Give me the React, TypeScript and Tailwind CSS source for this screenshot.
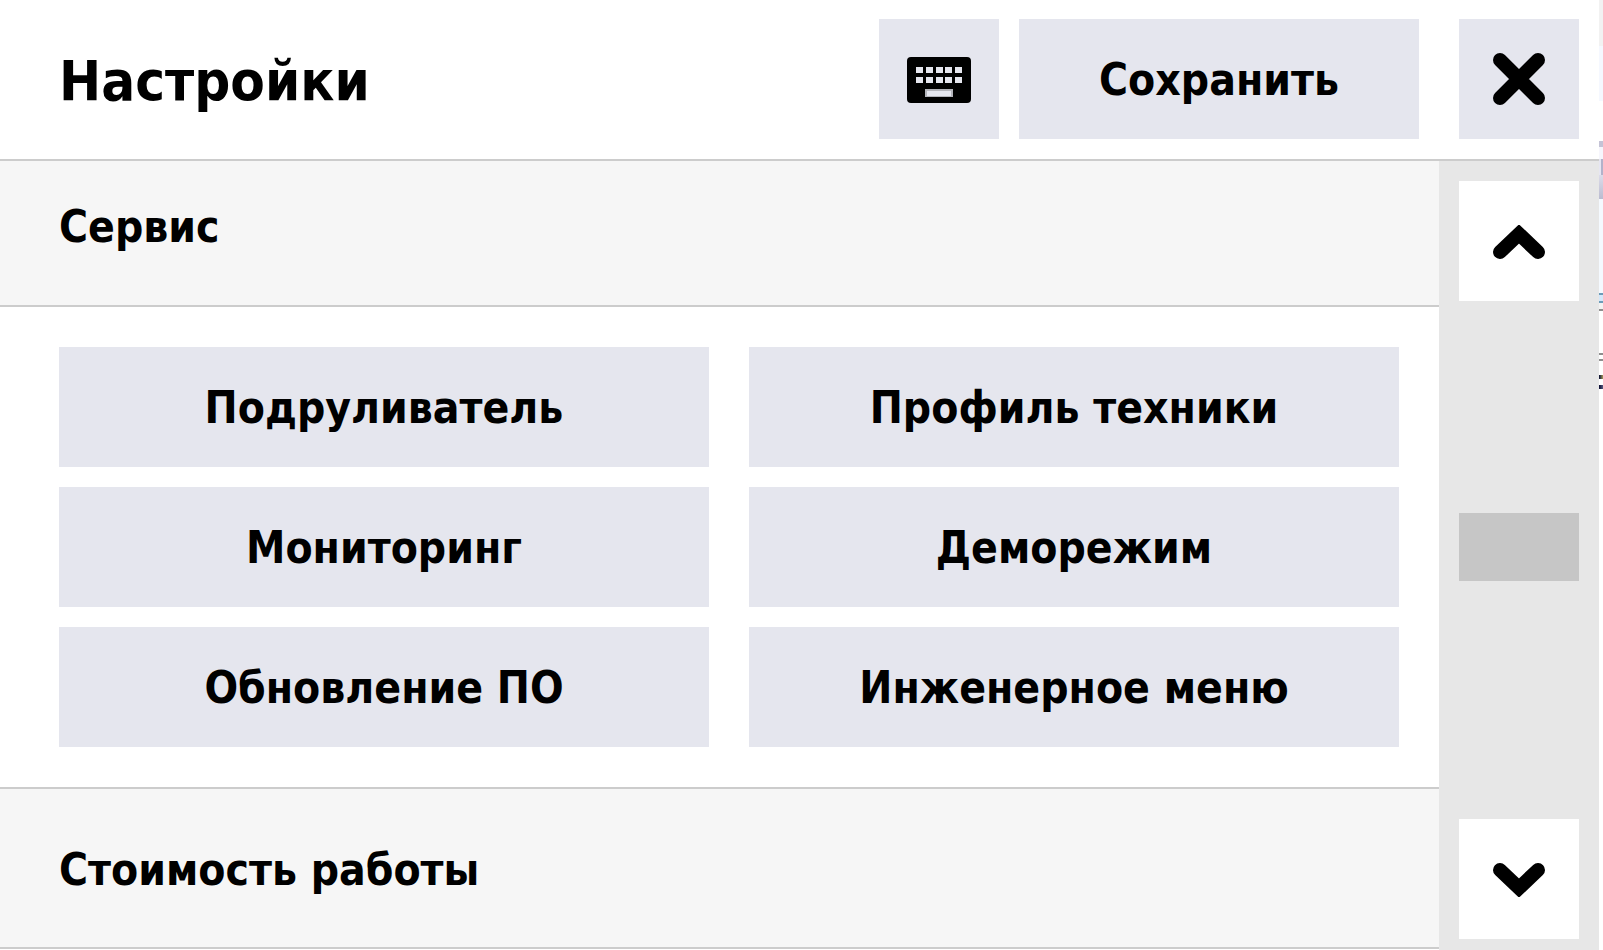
import React from "react";

const actions = [
  "Подруливатель",
  "Профиль техники",
  "Мониторинг",
  "Деморежим",
  "Обновление ПО",
  "Инженерное меню",
];

// strip of the desktop that stays visible to the right of the window
const backdrop = [
  "h-[46px] bg-[#f2f2f2]",
  "h-[55px] bg-[#f5f8ff]",
  "h-10 bg-white",
  "h-1.5 bg-[#c4c3d6]",
  "h-3 bg-[#f6f6fd]",
  "h-4 bg-linear-to-r from-[#e6e6f2] from-50% to-[#b2b2ca] to-50%",
  "h-6 bg-linear-to-b from-[#dcdcea] to-[#babbd0]",
  "h-[94px] bg-[#f4f9ff]",
  "h-0.5 bg-[#6c9cb8]",
  "h-1.5 bg-[#d5e8fb]",
  "h-0.5 bg-[#6c9cb8]",
  "h-1.5 bg-[#f3f3f3]",
  "h-0.5 bg-[#8e8e8e]",
  "h-[42px] bg-white",
  "h-0.5 bg-[#8e8e8e]",
  "h-1 bg-white",
  "h-0.5 bg-[#8e8e8e]",
  "h-3.5 bg-white",
  "h-1 bg-linear-to-r from-[#0a0a30] to-[#a89a50]",
  "h-1.5 bg-white",
  "h-1 bg-linear-to-r from-[#0a0a30] to-[#5a5a80]",
];

function KeyboardIcon() {
  return (
    <svg viewBox="0 0 64 46" className="w-16 h-[46px]" aria-hidden="true">
      <rect width="64" height="46" rx="4" />
      {[10, 20].map((y) =>
        [9, 19, 29, 38, 48].map((x) => (
          <rect key={`${x}-${y}`} x={x} y={y} width="7" height="6" fill="#e5e6ee" />
        ))
      )}
      <rect x="18" y="32" width="28" height="8" fill="#b4b5bb" />
      <rect x="20" y="34" width="24" height="5" fill="#e5e6ee" />
    </svg>
  );
}

function CloseIcon() {
  return (
    <svg viewBox="0 0 52 52" className="w-[52px] h-[52px]" aria-hidden="true">
      <path d="M7 7 45 45M45 7 7 45" fill="none" stroke="#000" strokeWidth="14" strokeLinecap="round" />
    </svg>
  );
}

function ArrowIcon({ className }: { className?: string }) {
  return (
    <svg viewBox="0 0 52 34" className={`w-[52px] h-[34px] ${className ?? ""}`} aria-hidden="true">
      <path d="M7 27 26 9 45 27" fill="none" stroke="#000" strokeWidth="14" strokeLinecap="round" />
    </svg>
  );
}

function SectionTitle({ children, className }: { children: React.ReactNode; className: string }) {
  return (
    <h2 className={`bg-[#f6f6f6] border-b-2 border-[#cccccc] pl-[59px] text-[44px] leading-[56px] ${className}`}>
      {children}
    </h2>
  );
}

export default function App() {
  return (
    <div className="flex min-h-screen bg-white text-black font-bold font-['DejaVu_Sans_Condensed','DejaVu_Sans',sans-serif]">
      <div className="flex flex-col flex-1 min-w-0">
        <header className="flex items-center gap-5 border-b-2 border-[#cccccc] pl-[59px] pr-5 pt-[19px] pb-5">
          <h1 className="flex-1 pt-1 text-[56px] leading-[64px]">Настройки</h1>
          <button type="button" aria-label="Клавиатура" className="flex items-center justify-center w-30 h-30 pt-0.5 bg-[#e5e6ee]">
            <KeyboardIcon />
          </button>
          <button type="button" className="w-100 h-30 pt-0.5 bg-[#e5e6ee] text-[44px] leading-[56px]">
            Сохранить
          </button>
          <button type="button" aria-label="Закрыть" className="flex items-center justify-center w-30 h-30 ml-5 bg-[#e5e6ee]">
            <CloseIcon />
          </button>
        </header>

        <div className="flex flex-1">
          <main className="flex-1">
            <SectionTitle className="pt-[38px] pb-[50px]">Сервис</SectionTitle>
            <div className="grid grid-cols-2 gap-x-10 gap-y-5 border-b-2 border-[#cccccc] pl-[59px] pr-10 py-10">
              {actions.map((label) => (
                <button key={label} type="button" className="h-30 pt-0.5 bg-[#e5e6ee] text-[44px] leading-[56px]">
                  {label}
                </button>
              ))}
            </div>
            <SectionTitle className="pt-[53px] pb-[49px]">Стоимость работы</SectionTitle>
          </main>

          <aside className="flex flex-col w-40 bg-[#e7e7e7] px-5 pt-5 pb-[11px]">
            <button type="button" aria-label="Вверх" className="flex items-center justify-center h-30 pt-0.5 bg-white">
              <ArrowIcon />
            </button>
            <div className="flex-1 pt-[212px]">
              <div className="h-17 bg-[#c6c6c6]" />
            </div>
            <button type="button" aria-label="Вниз" className="flex items-center justify-center h-30 pt-0.5 bg-white">
              <ArrowIcon className="rotate-180" />
            </button>
          </aside>
        </div>
      </div>

      <div className="w-1 bg-white" aria-hidden="true">
        {backdrop.map((strip, i) => (
          <div key={i} className={strip} />
        ))}
      </div>
    </div>
  );
}
